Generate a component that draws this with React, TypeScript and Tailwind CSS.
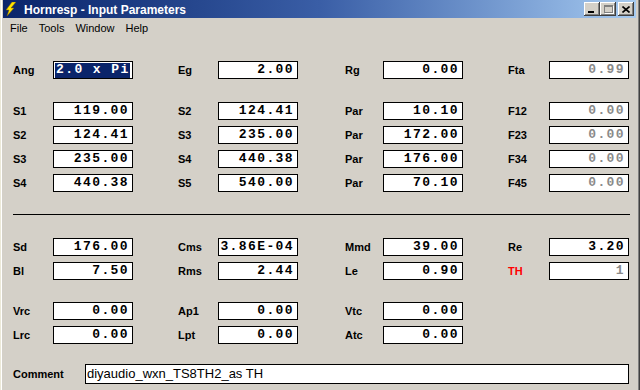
import React from 'react';

type FieldProps = {
  label: string;
  value?: string;
  lw: number;
  w: number;
  disabled?: boolean;
  red?: boolean;
  selected?: boolean;
  left?: boolean;
};

const labelWidths: Record<number, string> = {
  38: 'w-[38px]',
  40: 'w-[40px]',
  41: 'w-[41px]',
};

const fieldWidths: Record<number, string> = {
  163: 'w-[163px]',
  165: 'w-[165px]',
  167: 'w-[167px]',
  121: 'w-[121px]',
};

const Field: React.FC<FieldProps> = ({ label, value, lw, w, disabled, red, selected, left }) => (
  <div className={`flex items-center shrink-0 ${fieldWidths[w]}`}>
    <span
      className={`${labelWidths[lw]} shrink-0 text-[11px] font-bold font-['Liberation_Sans',Arial,sans-serif] ${
        red ? 'text-[#ff0000]' : 'text-black'
      }`}
    >
      {label}
    </span>
    <div
      className={`w-[80px] h-[18px] shrink-0 border border-black bg-white flex items-center font-['Liberation_Mono',monospace] font-bold text-[13px] tracking-[1.4px] whitespace-pre ${
        left ? 'justify-start pl-[1px]' : 'justify-end pr-[3px]'
      } ${disabled ? 'text-[#8a8a8a]' : 'text-black'}`}
    >
      {selected ? (
        <span className="bg-[#0a246a] text-white h-[15px] flex items-center pl-[1px]">{value}</span>
      ) : (
        value
      )}
    </div>
  </div>
);

type Cell = Omit<FieldProps, 'lw' | 'w'> | null;

const cols = [
  { lw: 40, w: 165 },
  { lw: 40, w: 167 },
  { lw: 38, w: 163 },
  { lw: 41, w: 121 },
];

const Row: React.FC<{ cells: Cell[] }> = ({ cells }) => (
  <div className="flex h-[18px]">
    {cells.map((c, i) =>
      c ? (
        <Field key={i} {...c} lw={cols[i].lw} w={cols[i].w} />
      ) : (
        <div key={i} className={`shrink-0 ${fieldWidths[cols[i].w]}`} />
      )
    )}
  </div>
);

const WinButton: React.FC<{ children: React.ReactNode }> = ({ children }) => (
  <div className="w-[16px] h-[14px] bg-[#d4d0c8] flex items-center justify-center shadow-[inset_-1px_-1px_#404040,inset_1px_1px_#ffffff,inset_-2px_-2px_#808080,inset_2px_2px_#d4d0c8]">
    {children}
  </div>
);

export default function App() {
  return (
    <div className="w-[640px] h-[390px] overflow-hidden bg-[#d4d0c8] flex flex-col pl-[3px] pr-[4px] font-['Liberation_Sans',Arial,sans-serif] shadow-[inset_1px_0_#ece9d8,inset_2px_0_#ffffff,inset_-1px_0_#404040,inset_-2px_0_#808080]">
      {/* title bar */}
      <div className="h-[18px] shrink-0 flex items-center bg-linear-to-r from-[#0a246a] via-[#3a5ea6] to-[#a6caf0] pl-[3px] pr-[2px]">
        <svg width="10" height="14" viewBox="0 0 10 14" className="shrink-0">
          <polygon points="6,0 10,0 5,6 8,6 1,14 3,8 0,8" fill="#ffe400" stroke="#806000" strokeWidth="0.5" />
        </svg>
        <span className="ml-[8px] text-white font-bold text-[12px] mt-[2px]">Hornresp - Input Parameters</span>
        <div className="ml-auto flex items-center">
          <WinButton>
            <div className="w-[6px] h-[2px] bg-black mt-[6px] mr-[2px]" />
          </WinButton>
          <WinButton>
            <div className="w-[9px] h-[8px] border border-[#808080] border-t-2 shadow-[1px_1px_#ffffff]" />
          </WinButton>
          <div className="w-[2px]" />
          <WinButton>
            <svg width="8" height="7" viewBox="0 0 8 7">
              <path d="M0.5 0.5 L7.5 6.5 M7.5 0.5 L0.5 6.5" stroke="#000" strokeWidth="1.6" />
            </svg>
          </WinButton>
        </div>
      </div>

      {/* menu bar */}
      <div className="h-[20px] shrink-0 flex items-center gap-[11px] pl-[7px] text-[11px] text-black pt-[1px]">
        <span>File</span>
        <span>Tools</span>
        <span>Window</span>
        <span>Help</span>
      </div>

      {/* form */}
      <div className="flex flex-col pl-[10px] pt-[23px]">
        <Row
          cells={[
            { label: 'Ang', value: '2.0 x Pi', selected: true, left: true },
            { label: 'Eg', value: '2.00' },
            { label: 'Rg', value: '0.00' },
            { label: 'Fta', value: '0.99', disabled: true },
          ]}
        />

        <div className="flex flex-col gap-[6px] mt-[23px]">
          <Row
            cells={[
              { label: 'S1', value: '119.00' },
              { label: 'S2', value: '124.41' },
              { label: 'Par', value: '10.10' },
              { label: 'F12', value: '0.00', disabled: true },
            ]}
          />
          <Row
            cells={[
              { label: 'S2', value: '124.41' },
              { label: 'S3', value: '235.00' },
              { label: 'Par', value: '172.00' },
              { label: 'F23', value: '0.00', disabled: true },
            ]}
          />
          <Row
            cells={[
              { label: 'S3', value: '235.00' },
              { label: 'S4', value: '440.38' },
              { label: 'Par', value: '176.00' },
              { label: 'F34', value: '0.00', disabled: true },
            ]}
          />
          <Row
            cells={[
              { label: 'S4', value: '440.38' },
              { label: 'S5', value: '540.00' },
              { label: 'Par', value: '70.10' },
              { label: 'F45', value: '0.00', disabled: true },
            ]}
          />
        </div>

        {/* separator */}
        <div className="w-[617px] h-[1px] bg-black mt-[22px]" />

        <div className="flex flex-col gap-[6px] mt-[23px]">
          <Row
            cells={[
              { label: 'Sd', value: '176.00' },
              { label: 'Cms', value: '3.86E-04' },
              { label: 'Mmd', value: '39.00' },
              { label: 'Re', value: '3.20' },
            ]}
          />
          <Row
            cells={[
              { label: 'Bl', value: '7.50' },
              { label: 'Rms', value: '2.44' },
              { label: 'Le', value: '0.90' },
              { label: 'TH', value: '1', disabled: true, red: true },
            ]}
          />
        </div>

        <div className="flex flex-col gap-[6px] mt-[22px]">
          <Row
            cells={[
              { label: 'Vrc', value: '0.00' },
              { label: 'Ap1', value: '0.00' },
              { label: 'Vtc', value: '0.00' },
              null,
            ]}
          />
          <Row
            cells={[
              { label: 'Lrc', value: '0.00' },
              { label: 'Lpt', value: '0.00' },
              { label: 'Atc', value: '0.00' },
              null,
            ]}
          />
        </div>

        {/* comment */}
        <div className="flex items-center mt-[20px]">
          <span className="w-[72px] shrink-0 text-[11px] font-bold text-black">Comment</span>
          <div className="w-[544px] h-[20px] border border-black bg-white flex items-center pl-[1px] text-[13px] text-black">
            diyaudio_wxn_TS8TH2_as TH
          </div>
        </div>
      </div>
    </div>
  );
}
